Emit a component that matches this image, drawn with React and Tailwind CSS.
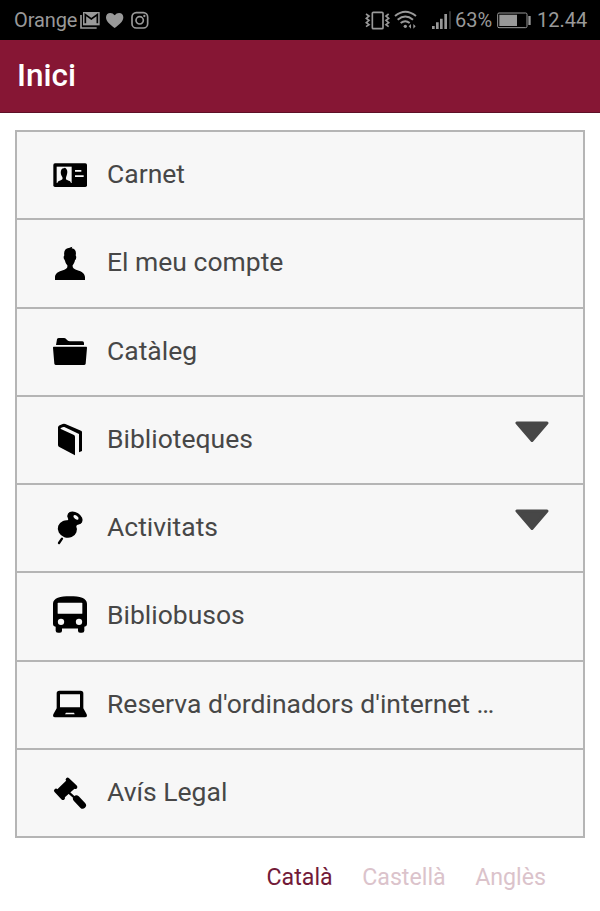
const Icon = ({ box, children }) => (
  <svg viewBox={box} className="h-10 w-10 shrink-0" fill="#000">{children}</svg>
);

const CardIcon = () => (
  <Icon box="150 90 120 120">
    <rect x="160" y="115" width="101" height="71" rx="5" />
    <rect x="170" y="125" width="45" height="49" fill="#f7f7f7" />
    <path d="M172 174C174 167 183 167 187 163C189 159 187 156 185 153C181 145 182 138 184 134C187 128 192 131 194 128C200 130 204 137 201 148C200 154 197 157 198 163C202 167 212 167 213 174Z" />
    <path d="M225 135h19v5h-19zM225 151h26v5h-26z" fill="#f7f7f7" />
  </Icon>
);

const PersonIcon = () => (
  <Icon box="30 24 120 120">
    <path d="M45 135V125C46 111 63 108 73 104C80 101 83 98 82 91C77 86 76 80 74 75C70 71 70 64 73 61C70 48 77 40 86 39C91 38 94 35 97 35L95 40C105 41 110 49 107 61C110 65 109 72 105 76C104 82 101 87 98 91C97 98 101 101 108 104C119 108 134 111 135 126V135Z" />
  </Icon>
);

const FolderIcon = () => (
  <Icon box="30 291 120 120">
    <path d="M48 330L51 313Q52 309 57 309H72Q76 309 79 313L82 316Q85 319 90 319H127Q132 319 132 324V330ZM41 335H139Q141 335 141 338L137 386Q136 390 132 390H48Q44 390 43 386L39 338Q39 335 41 335Z" />
  </Icon>
);

const BookIcon = () => (
  <Icon box="30 31 120 120">
    <path d="M54 53Q55 49 59 47L68 43Q72 41 76 43L123 63Q126 64 126 68V124L117 128V73L73 52Q69 51 64 54L61 57L102 76Q105 78 105 82V137L58 112Q54 110 54 106Z" />
  </Icon>
);

const PinIcon = () => (
  <Icon box="0 9 120 120">
    <ellipse cx="52" cy="72" rx="29" ry="26" transform="rotate(20 52 72)" />
    <path d="M38 50C54 50 60 42 52 32L92 56C84 58 76 58 79 74Z" />
    <ellipse cx="75" cy="39" rx="25" ry="17" transform="rotate(33 75 39)" />
    <ellipse cx="78" cy="37" rx="9" ry="5" transform="rotate(38 78 37)" fill="#f7f7f7" />
    <path d="M36 101L27 114" stroke="#000" strokeWidth="7" strokeLinecap="round" />
  </Icon>
);

const BusIcon = () => (
  <Icon box="30 19.5 120 120">
    <path d="M39 43C39 25 61 20 90 20S141 25 141 43V104Q141 110 133 112V124Q133 130 126 130H120Q114 130 114 124V117H66V124Q66 130 60 130H54Q47 130 47 124V112Q39 110 39 104Z" />
    <g fill="#f7f7f7">
      <rect x="53" y="40" width="74" height="33" rx="2" />
      <circle cx="63" cy="97" r="9.5" />
      <circle cx="117" cy="97" r="9.5" />
    </g>
  </Icon>
);

const LaptopIcon = () => (
  <Icon box="30 287 120 120">
    <path d="M50 312Q50 304 58 304H122Q130 304 130 312V357L140 375Q143 384 135 384H45Q37 384 40 375L50 357Z" />
    <path d="M60 315H120V354H60ZM78 370H102L104 375H75Z" fill="#f7f7f7" />
  </Icon>
);

const GavelIcon = () => (
  <Icon box="0 9 120 120">
    <g stroke="#000" strokeLinejoin="round" strokeLinecap="round">
      <path d="M50 34L71 55L43 80L23 60Z" strokeWidth="5" />
      <path d="M18 62L39 84M53 29L76 51" strokeWidth="12" />
      <path d="M56 67L78 87" strokeWidth="7" />
      <path d="M79 86L98 106" strokeWidth="20" />
    </g>
  </Icon>
);

const items = [
  { label: "Carnet", icon: CardIcon },
  { label: "El meu compte", icon: PersonIcon },
  { label: "Catàleg", icon: FolderIcon },
  { label: "Biblioteques", icon: BookIcon, expandable: true },
  { label: "Activitats", icon: PinIcon, expandable: true },
  { label: "Bibliobusos", icon: BusIcon },
  { label: "Reserva d'ordinadors d'internet …", icon: LaptopIcon },
  { label: "Avís Legal", icon: GavelIcon },
];

const StatusBar = () => (
  <div className="flex h-10 items-center bg-black pl-[14px] pr-[13px] text-[20px] leading-[42px] text-[#999]">
    <span className="w-[65px] whitespace-nowrap tracking-[-0.1px]">Orange</span>
    <svg className="h-10 w-[72px]" viewBox="237 0 216 120" fill="none">
      <path d="M243 45V84H290" stroke="#999" strokeWidth="5" />
      <path d="M249 36H299V76H249Z" fill="#999" />
      <path d="M256 70V44L274 57L292 44V70" stroke="#000" strokeWidth="5" />
      <path d="M344 84C333 76 318 66 318 52C318 36 337 35 344 46C351 35 370 36 370 52C370 66 355 76 344 84Z" fill="#999" />
      <g stroke="#999" strokeWidth="5">
        <rect x="396" y="38" width="47" height="46" rx="13" />
        <circle cx="419" cy="61" r="11" />
      </g>
      <circle cx="433" cy="48" r="3.5" fill="#999" />
    </svg>
    <svg className="ml-auto h-10 w-[92px] shrink-0" viewBox="40 0 276 120" fill="none" stroke="#999">
      <rect x="68" y="37" width="32" height="49" rx="3" strokeWidth="5" />
      <path d="M49 42L58 48L50 55L58 61L50 68L58 74L49 80M117 42L109 48L117 55L109 61L117 68L109 74L117 80" strokeWidth="5" />
      <path d="M136 48Q167 22 199 48M144 59Q167 40 190 59M153 69Q167 58 180 69" strokeWidth="6" />
      <circle cx="167" cy="79" r="5" fill="#999" stroke="none" />
      <path d="M184 72V86L177 79ZM191 72V86L198 79Z" fill="#999" stroke="none" />
      <path d="M251 78V87M263 67V87M275 56V87M288 42V87" strokeWidth="8" />
      <path d="M301 34V87" stroke="#333" strokeWidth="6" />
    </svg>
    <span className="w-[41px] whitespace-nowrap">63%</span>
    <svg className="h-10 w-[36px] shrink-0" viewBox="438 0 108 120">
      <rect x="443" y="39" width="88" height="44" rx="4" fill="none" stroke="#999" strokeWidth="3" />
      <path d="M448 44H501V78H448ZM535 48H542V75H535Z" fill="#999" />
    </svg>
    <span className="ml-[5px] w-[50px] whitespace-nowrap">12.44</span>
  </div>
);

export default function App() {
  return (
    <div className="h-[911px] w-[600px] overflow-hidden bg-white font-['Roboto',sans-serif]">
      <StatusBar />
      <header className="flex h-[73px] items-center border-b border-[#5e1027] bg-[#861634] pl-[17px] text-[31.5px] font-medium text-white">
        <h1>Inici</h1>
      </header>
      <main className="px-[15px] pt-[17px]">
        <ul className="grid h-[708px] grid-rows-8 border-x-2 border-b-2 border-[#b5b5b5] bg-[#f7f7f7]">
          {items.map(({ label, icon: ItemIcon, expandable }) => (
            <li key={label} className="flex items-center border-t-2 border-[#b5b5b5] pl-[33px] pr-[34px]">
              <ItemIcon />
              <span className="mb-[2px] ml-[17px] text-[26.5px] leading-9 whitespace-nowrap text-[#474747]">{label}</span>
              {expandable && (
                <svg className="mb-4 ml-auto h-[22px] w-[34px]" viewBox="0 0 34 22">
                  <path d="M2 2H32L17 19.5Z" fill="#474747" stroke="#474747" strokeWidth="3" strokeLinejoin="round" />
                </svg>
              )}
            </li>
          ))}
        </ul>
      </main>
      <nav className="flex justify-end gap-[29.5px] pt-[20px] pr-[54px] text-[23.2px] leading-[38px]">
        <span className="text-[#721a38]">Català</span>
        <span className="text-[#dbc3cb]">Castellà</span>
        <span className="text-[#dbc3cb]">Anglès</span>
      </nav>
    </div>
  );
}
